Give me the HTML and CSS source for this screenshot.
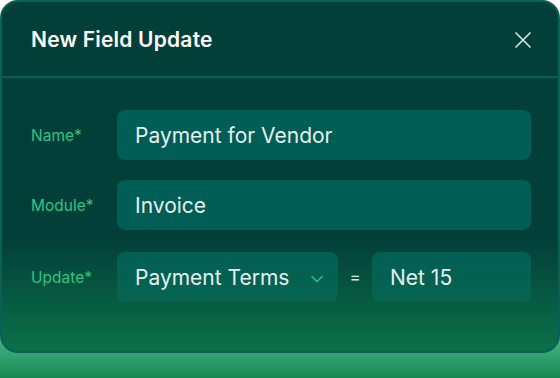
FILE: index.html
```
<!DOCTYPE html>
<html lang="en">
<head>
    <meta charset="UTF-8">
    <title>New Field Update</title>
    <link rel="stylesheet" href="styles.css">
</head>
<body>
    <div class="dialog">
        <div class="dialog-head">
            <h2>New Field Update</h2>
            <svg class="close" width="18" height="18" viewBox="0 0 18 18">
                <path d="M2 2 L16 16 M16 2 L2 16" stroke="#cfe3de" stroke-width="1.7" stroke-linecap="round" fill="none"/>
            </svg>
        </div>
        <div class="dialog-body">
            <div class="row">
                <label>Name*</label>
                <div class="field wide">Payment for Vendor</div>
            </div>
            <div class="row">
                <label>Module*</label>
                <div class="field wide">Invoice</div>
            </div>
            <div class="row last">
                <label>Update*</label>
                <div class="field select">
                    <span>Payment Terms</span>
                    <svg width="14" height="8" viewBox="0 0 14 8">
                        <path d="M1.5 1.2 L7 6.5 L12.5 1.2" stroke="#2fc384" stroke-width="1.5" fill="none"/>
                    </svg>
                </div>
                <span class="eq">=</span>
                <div class="field value">Net 15</div>
            </div>
        </div>
    </div>
</body>
</html>
```
FILE: styles.css
```
body { margin: 0; width: 560px; height: 378px; font-family: Inter, "Open Sans", sans-serif; background: linear-gradient(to bottom, #ffffff 0, #ffffff 200px, #36a675 352px, #178851 378px); overflow: hidden; }
.dialog { width: 556px; height: 349px; border: 2px solid #0c5f55; border-radius: 18px; background: linear-gradient(to bottom, #023f39 0, #023f39 235px, #0b7048 100%); overflow: hidden; }
.dialog-head { height: 74px; border-bottom: 2px solid #0b5e55; display: flex; align-items: center; justify-content: space-between; padding: 0 26px 0 29px; }
.dialog-head h2 { margin: 0; font-size: 21px; font-weight: 600; color: #ffffff; letter-spacing: 0.2px; }
.close { margin-top: 2px; }
.dialog-body { padding: 32px 27px 0 29px; display: flex; flex-direction: column; gap: 20px; }
.row { display: flex; align-items: center; height: 50px; }
.row.last { margin-top: 2px; }
.row label { width: 86px; font-size: 15.5px; color: #2fc384; }
.field { height: 50px; border-radius: 8px; background: #005e56; color: #e6f0ee; font-size: 21px; display: flex; align-items: center; padding: 0 18px; box-sizing: border-box; }
.field.wide { flex: 1; }
.field.select { width: 221px; justify-content: space-between; padding-right: 14px; background: linear-gradient(to bottom, #035e55, #066550); }
.field.select svg { margin-top: 4px; }
.field.value { flex: 1; background: linear-gradient(to bottom, #035e55, #066550); }
.eq { width: 34px; text-align: center; color: #d6e6e2; font-size: 17px; }
```
